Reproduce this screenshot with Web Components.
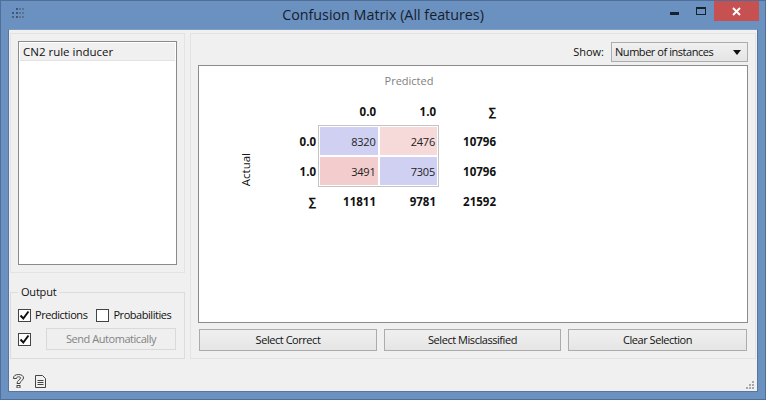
<!DOCTYPE html>
<html>
<head>
<meta charset="utf-8">
<title>Confusion Matrix</title>
<style>
    html, body { margin: 0; padding: 0; }
    body { width: 766px; height: 400px; overflow: hidden; font-family: "Open Sans", sans-serif; font-size: 11px; letter-spacing: -0.45px; color: #111; }
</style>
</head>
<body>
<owl-window heading="Confusion Matrix (All features)">
    <owl-side slot="side">
        <owl-list slot="list"><span>CN2 rule inducer</span></owl-list>
        <owl-group slot="output" label="Output">
            <div style="display:flex;gap:9px;height:20px;align-items:center">
                <owl-check checked>Predictions</owl-check>
                <owl-check>Probabilities</owl-check>
            </div>
            <div style="display:flex;gap:11px;align-items:center;margin-top:3px">
                <owl-check checked></owl-check>
                <owl-button disabled style="width:130px;flex:none">Send Automatically</owl-button>
            </div>
        </owl-group>
    </owl-side>
    <owl-main slot="main">
        <owl-combo slot="top" label="Show:" value="Number of instances"></owl-combo>
        <owl-matrix slot="view"></owl-matrix>
        <owl-button slot="actions">Select Correct</owl-button>
        <owl-button slot="actions">Select Misclassified</owl-button>
        <owl-button slot="actions">Clear Selection</owl-button>
    </owl-main>
</owl-window>

<script>
class OwlWindow extends HTMLElement {
    constructor() {
        super();
        this.attachShadow({mode: 'open'});
    }
    connectedCallback() {
        this.shadowRoot.innerHTML = `
            <style>
                :host { display: flex; flex-direction: column; width: 766px; height: 400px; box-sizing: border-box; background: #6b91c0; border: 1px solid #4f6f98; }
                #bar { display: flex; align-items: flex-start; height: 28px; flex: none; position: relative; }
                #grip { margin: 6px 0 0 10px; }
                #title { position: absolute; left: 0; right: 0; top: 4px; text-align: center; font-size: 14.3px; letter-spacing: 0; line-height: 20px; color: #16202c; }
                #btns { margin-left: auto; display: flex; align-items: flex-start; margin-right: 6px; }
                .btn { height: 20px; display: flex; align-items: center; justify-content: center; }
                .btn svg { display: block; }
                #close { width: 45px; background: #c75050; }
                #client { flex: 1; margin: 0 7px 7px 7px; background: #f0f0f0; border: 1px solid #54779f; border-top-color: #7f9cc2; display: flex; flex-direction: column; min-height: 0; }
                #panes { flex: none; display: flex; gap: 5px; padding: 3px 0 0 1px; }
                #foot { flex: 1; display: flex; align-items: center; gap: 11px; padding: 12px 3px 0 4px; position: relative; }
                #sizer { position: absolute; right: 2px; bottom: 1px; }
            </style>
            <div id="bar">
                <svg id="grip" width="13" height="13" viewBox="0 0 13 13" fill="#43566e"><rect x="1" y="5" width="2" height="2"/><rect x="1" y="9" width="2" height="2" opacity=".8"/><rect x="5" y="1" width="2" height="2"/><rect x="5" y="5" width="2" height="2"/><rect x="5" y="9" width="2" height="2"/><rect x="8" y="1" width="2" height="2" opacity=".5"/><rect x="8" y="5" width="2" height="2" opacity=".5"/><rect x="8" y="9" width="2" height="2" opacity=".5"/><rect x="11" y="1" width="2" height="2" opacity=".5"/><rect x="11" y="5" width="2" height="2" opacity=".5"/><rect x="11" y="9" width="2" height="2" opacity=".5"/></svg>
                <div id="title">${this.getAttribute('heading')}</div>
                <div id="btns">
                    <div class="btn" style="width:27px"><svg width="9" height="8"><rect width="9" height="3" y="5" fill="#18222f"/></svg></div>
                    <div class="btn" style="width:26px"><svg width="10" height="8"><rect x=".5" y=".5" width="9" height="7" fill="none" stroke="#18222f"/><rect width="10" height="2" fill="#18222f"/></svg></div>
                    <div class="btn" id="close"><svg width="9" height="9"><path d="M1 1L8 8M8 1L1 8" stroke="#fff" stroke-width="2"/></svg></div>
                </div>
            </div>
            <div id="client">
                <div id="panes">
                    <slot name="side"></slot>
                    <slot name="main"></slot>
                </div>
                <div id="foot">
                    <svg width="11" height="14" viewBox="0 0 11 14" fill="none" stroke="#444"><path d="M.5 4C.5 1.800 2.500 .5 5.500 .5S10.500 1.800 10.500 4C10.500 6.500 7 6.500 7 9.500H4C4 6 7.500 6 7.500 4C7.500 3 6.500 2.800 5.500 2.800S3.500 3.300 3.500 4.500H.5Z"/><rect x="4" y="11.500" width="3" height="2.500"/></svg>
                    <svg width="11" height="13" viewBox="0 0 11 13" fill="none" stroke="#444"><path d="M.5 .5H7.500L10.500 3.500V12.500H.5Z"/><path d="M2.500 5.500H8.500M2.500 7.500H8.500M2.500 9.500H8.500"/></svg>
                    <svg id="sizer" width="9" height="9" fill="#a8a8a8"><rect x="6" y="0" width="2" height="2"/><rect x="3" y="3" width="2" height="2"/><rect x="6" y="3" width="2" height="2"/><rect x="0" y="6" width="2" height="2"/><rect x="3" y="6" width="2" height="2"/><rect x="6" y="6" width="2" height="2"/></svg>
                </div>
            </div>
        `;
    }
}

class OwlSide extends HTMLElement {
    constructor() {
        super();
        this.attachShadow({mode: 'open'}).innerHTML = `
            <style>
                :host { display: flex; flex-direction: column; width: 175px; flex: none; }
                #gap { height: 19px; }
            </style>
            <slot name="list"></slot>
            <div id="gap"></div>
            <slot name="output"></slot>
        `;
    }
}

class OwlList extends HTMLElement {
    constructor() {
        super();
        this.attachShadow({mode: 'open'}).innerHTML = `
            <style>
                :host { display: block; box-sizing: border-box; height: 240px; padding: 7px; border: 1px solid #e3e3e3; }
                #box { height: 100%; box-sizing: border-box; background: #fff; border: 1px solid #8b8b8b; padding: 1px; }
                ::slotted(span) { display: block; height: 17px; line-height: 17px; padding-left: 3px; background: #f0f0f0; border: 1px solid #e2e2e2; border-width: 0 0 1px 0; font-size: 11.5px; letter-spacing: 0; color: #111; }
            </style>
            <div id="box"><slot></slot></div>
        `;
    }
}

class OwlGroup extends HTMLElement {
    constructor() {
        super();
        this.attachShadow({mode: 'open'}).innerHTML = `
            <style>
                :host { display: block; box-sizing: border-box; height: 67px; border: 1px solid #dcdcdc; padding: 12px 7px 0 7px; position: relative; }
                #label { position: absolute; left: 7px; top: -9px; padding: 0 3px; background: #f0f0f0; line-height: 15px; letter-spacing: -0.2px; }
            </style>
            <div id="label">${this.getAttribute('label')}</div>
            <slot></slot>
        `;
    }
}

class OwlCheck extends HTMLElement {
    constructor() {
        super();
        const mark = this.hasAttribute('checked')
            ? '<svg width="11" height="11" viewBox="0 0 11 11"><path d="M1.500 5.500L4.300 8.500L9.500 1.500" fill="none" stroke="#111" stroke-width="2"/></svg>'
            : '';
        this.attachShadow({mode: 'open'}).innerHTML = `
            <style>
                :host { display: inline-flex; align-items: center; gap: 4px; white-space: nowrap; }
                #box { width: 11px; height: 11px; box-sizing: content-box; border: 1px solid #444; background: #fff; display: flex; align-items: center; justify-content: center; flex: none; }
                #text { padding-bottom: 2px; }
            </style>
            <div id="box">${mark}</div>
            <span id="text"><slot></slot></span>
        `;
    }
}

class OwlButton extends HTMLElement {
    constructor() {
        super();
        this.attachShadow({mode: 'open'}).innerHTML = `
            <style>
                :host { display: flex; align-items: center; justify-content: center; box-sizing: border-box; height: 22px; padding-bottom: 2px; border: 1px solid #acacac; background: linear-gradient(#f0f0f0, #e5e5e5); color: #111; white-space: nowrap; }
                :host([disabled]) { background: #efefef; border-color: #d9d9d9; color: #838383; }
            </style>
            <slot></slot>
        `;
    }
}

class OwlCombo extends HTMLElement {
    constructor() {
        super();
        this.attachShadow({mode: 'open'}).innerHTML = `
            <style>
                :host { display: flex; justify-content: flex-end; align-items: center; gap: 7px; height: 20px; }
                #label { letter-spacing: 0; padding-bottom: 2px; }
                #box { box-sizing: border-box; width: 137px; height: 20px; border: 1px solid #acacac; background: linear-gradient(#f0f0f0, #e5e5e5); display: flex; align-items: center; padding: 0 5px 0 3px; }
                #value { padding-bottom: 2px; }
                #arrow { margin-left: auto; width: 0; height: 0; border: 4px solid transparent; border-top: 5px solid #111; border-bottom: 0; margin-right: 1px; }
            </style>
            <span id="label">${this.getAttribute('label')}</span>
            <div id="box"><span id="value">${this.getAttribute('value')}</span><i id="arrow"></i></div>
        `;
    }
}

class OwlMain extends HTMLElement {
    constructor() {
        super();
        this.attachShadow({mode: 'open'}).innerHTML = `
            <style>
                :host { display: flex; flex-direction: column; box-sizing: border-box; width: 566px; height: 326px; flex: none; border: 1px solid #e3e3e3; padding: 8px 7px 0 7px; gap: 3px; }
                #actions { display: grid; grid-template-columns: 178px 177px 179px; column-gap: 7px; margin: 3px 0 0 1px; }
            </style>
            <slot name="top"></slot>
            <slot name="view"></slot>
            <div id="actions"><slot name="actions"></slot></div>
        `;
    }
}

class OwlMatrix extends HTMLElement {
    constructor() {
        super();
        this.attachShadow({mode: 'open'});
    }

    connectedCallback() {
        this.render();
    }

    render() {
        this.html();
        this.css();
    }

    html() {
        this.shadowRoot.innerHTML += `
            <div id="predicted">Predicted</div>
            <div id="body">
                <div id="actual"><span>Actual</span></div>
                <div id="table">
                    <b style="grid-area:1/2">0.0</b><b style="grid-area:1/3">1.0</b><b style="grid-area:1/4">&#8721;</b>
                    <b style="grid-area:2/1">0.0</b><b style="grid-area:3/1">1.0</b><b style="grid-area:4/1">&#8721;</b>
                    <div id="cells">
                        <div class="hit">8320</div>
                        <div class="light">2476</div>
                        <div class="miss">3491</div>
                        <div class="hit">7305</div>
                    </div>
                    <b style="grid-area:2/4">10796</b><b style="grid-area:3/4">10796</b>
                    <b style="grid-area:4/2">11811</b><b style="grid-area:4/3">9781</b><b style="grid-area:4/4">21592</b>
                </div>
            </div>
        `;
    }

    css() {
        this.shadowRoot.innerHTML += `
            <style>
                :host { display: block; box-sizing: border-box; height: 258px; background: #fff; border: 1px solid #8b8b8b; color: #111; letter-spacing: 0; }
                #predicted { margin: 7px 0 0 0; text-align: center; color: #7f7f7f; width: 420px; line-height: 16px; }
                #body { display: flex; margin-top: 7px; margin-left: 36px; }
                #actual { width: 20px; padding-right: 3px; height: 120px; margin-top: 14px; display: flex; align-items: center; justify-content: center; font-size: 11.5px; }
                #actual span { writing-mode: vertical-rl; transform: rotate(180deg); }
                #table { display: grid; grid-template-columns: repeat(4, 60px); grid-template-rows: repeat(4, 30px); }
                b { display: flex; align-items: center; justify-content: flex-end; padding-right: 2px; font-weight: 700; font-size: 11.5px; }
                #cells { grid-area: 2 / 2 / 4 / 4; display: grid; grid-template-columns: 1fr 1fr; grid-template-rows: 1fr 1fr; gap: 2px; box-sizing: border-box; border: 1px solid #c4c4c4; padding: 1px; height: 62px; width: 121px; margin-top: -1px; color: #222; letter-spacing: -0.2px; }
                #cells div { display: flex; align-items: center; justify-content: flex-end; padding-right: 2px; }
                .hit { background: #cfd0f2; }
                .light { background: #f6d9d9; }
                .miss { background: #f3cdcd; }
            </style>
        `;
    }
}

customElements.define('owl-window', OwlWindow);
customElements.define('owl-side', OwlSide);
customElements.define('owl-list', OwlList);
customElements.define('owl-group', OwlGroup);
customElements.define('owl-check', OwlCheck);
customElements.define('owl-button', OwlButton);
customElements.define('owl-combo', OwlCombo);
customElements.define('owl-main', OwlMain);
customElements.define('owl-matrix', OwlMatrix);
</script>
</body>
</html>
